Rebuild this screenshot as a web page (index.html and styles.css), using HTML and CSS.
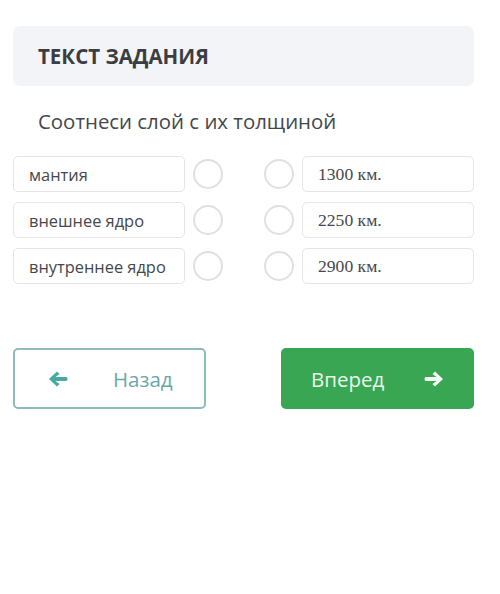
FILE: index.html
```html
<!DOCTYPE html>
<html lang="ru">
<head>
<meta charset="utf-8">
<link rel="stylesheet" href="styles.css">
</head>
<body>
<div class="page">
  <div class="task-head">ТЕКСТ ЗАДАНИЯ</div>
  <div class="task-text">Соотнеси слой с их толщиной</div>
  <div class="match">
    <div class="item left">мантия</div><div class="dot"></div><div></div><div class="dot"></div><div class="item right">1300 км.</div>
    <div class="item left">внешнее ядро</div><div class="dot"></div><div></div><div class="dot"></div><div class="item right">2250 км.</div>
    <div class="item left">внутреннее ядро</div><div class="dot"></div><div></div><div class="dot"></div><div class="item right">2900 км.</div>
  </div>
  <div class="nav">
    <div class="btn back">
      <svg class="ico" width="20" height="18" viewBox="0 0 20 18"><path d="M1 9 L9 1.5 L11.5 4 L7.5 7 H18 Q19.5 7 19.5 9 Q19.5 11 18 11 H7.5 L11.5 14 L9 16.5 Z" fill="#46aaa0"/></svg>
      <span class="back-label">Назад</span>
    </div>
    <div class="btn next">
      <span class="next-label">Вперед</span>
      <svg class="ico" width="20" height="18" viewBox="0 0 20 18"><path d="M19 9 L11 1.5 L8.5 4 L12.5 7 H2 Q0.5 7 0.5 9 Q0.5 11 2 11 H12.5 L8.5 14 L11 16.5 Z" fill="#f4fbf4"/></svg>
    </div>
  </div>
</div>
</body>
</html>
```
FILE: styles.css
```css
html, body { margin: 0; padding: 0; background: #fff; }
body { font-family: "Open Sans", "Noto Sans", sans-serif; }
.page { width: 461px; margin-left: 13px; padding-top: 26px; }
.task-head {
  height: 60px; box-sizing: border-box; background: #f3f4f7; border-radius: 7px;
  padding-left: 25px; display: flex; align-items: center;
  font-weight: 700; font-size: 20.5px; color: #3b3d43;
}
.task-text { padding: 21px 0 0 25px; font-size: 20.4px; color: #45474b; height: 49px; box-sizing: border-box; line-height: 28px; }
.match {
  display: grid; grid-template-columns: 172px 30px 1fr 30px 172px;
  column-gap: 8px; row-gap: 9.7px; margin-top: 21px; align-items: center;
}
.item {
  height: 36.3px; box-sizing: border-box; border: 1.5px solid #e4e5e7; border-radius: 5px;
  display: flex; align-items: center; color: #45474b;
}
.left { padding-left: 15px; font-size: 16.4px; }
.right { padding-left: 15px; font-family: "Liberation Serif", "DejaVu Serif", serif; font-size: 17.6px; color: #46484b; }
.dot { width: 30px; height: 30px; box-sizing: border-box; border: 2px solid #e0e0e0; border-radius: 50%; }
.nav { display: flex; justify-content: space-between; margin-top: 64px; }
.btn {
  width: 193px; height: 61px; box-sizing: border-box; border-radius: 5px;
  display: flex; align-items: center; font-size: 20.5px;
}
.back { border: 2px solid #8cbcbc; color: #6aa8a8; padding-left: 33px; }
.back-label { margin-left: 45px; }
.next { background: #38a653; color: #eaf7ea; padding-left: 30px; }
.next-label { margin-right: 40px; }
.ico { display: block; }
```
